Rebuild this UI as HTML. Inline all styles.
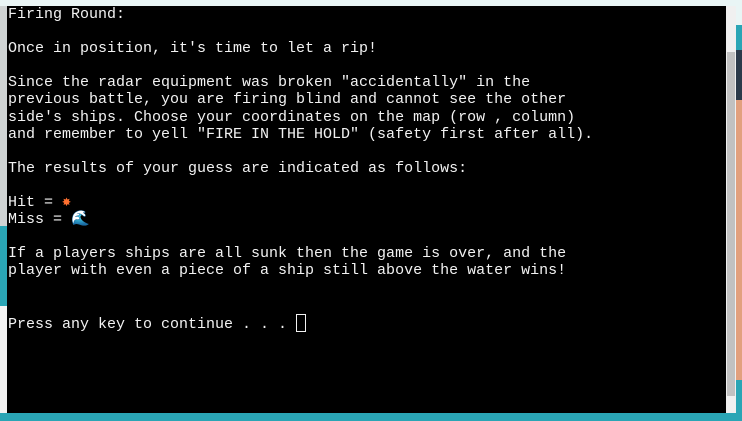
<!DOCTYPE html>
<html><head><style>
html,body{margin:0;padding:0;width:742px;height:421px;overflow:hidden;background:#e9f5f5;position:relative}
.left{position:absolute;left:0;top:6px;width:7px;height:407px;background:linear-gradient(#cfd3d3 0,#cfd3d3 220px,#2aa5b5 220px,#2aa5b5 300px,#f3f3f3 300px)}
.right{position:absolute;left:736px;top:0;width:6px;height:421px;background:linear-gradient(#e9f5f5 0,#e9f5f5 25px,#2aa5b5 25px,#2aa5b5 50px,#2b3a4a 50px,#2b3a4a 100px,#e2a07e 100px,#e2a07e 380px,#2aa5b5 380px)}
.bottom{position:absolute;left:0;top:413px;width:742px;height:8px;background:#2aa5b5}
.term{position:absolute;left:7px;top:6px;width:719px;height:407px;background:#000}
.sb{position:absolute;left:726px;top:6px;width:10px;height:407px;background:#f0f0f0}
.thumb{position:absolute;left:727px;top:52px;width:8px;height:344px;background:#c1c1c1}
pre{margin:0;position:absolute;left:8px;top:6px;font-family:"Liberation Mono","Courier New",monospace;font-size:15px;line-height:17.1px;color:#f2f2f2}
.cur{display:inline-block;width:8px;height:16px;border:1px solid #f2f2f2;vertical-align:-4px}
.e{font-size:15px;line-height:10px}
</style></head><body>
<div class="left"></div><div class="right"></div><div class="bottom"></div>
<div class="term"></div><div class="sb"></div><div class="thumb"></div>
<pre>Firing Round:

Once in position, it's time to let a rip!

Since the radar equipment was broken "accidentally" in the
previous battle, you are firing blind and cannot see the other
side's ships. Choose your coordinates on the map (row , column)
and remember to yell "FIRE IN THE HOLD" (safety first after all).

The results of your guess are indicated as follows:

Hit = <span class="e" style="color:#ff7030;font-weight:bold">✸</span>
Miss = <span class="e" style="color:#3ab0e0">🌊</span>

If a players ships are all sunk then the game is over, and the
player with even a piece of a ship still above the water wins!


Press any key to continue . . . <span class="cur"></span></pre>
</body></html>
